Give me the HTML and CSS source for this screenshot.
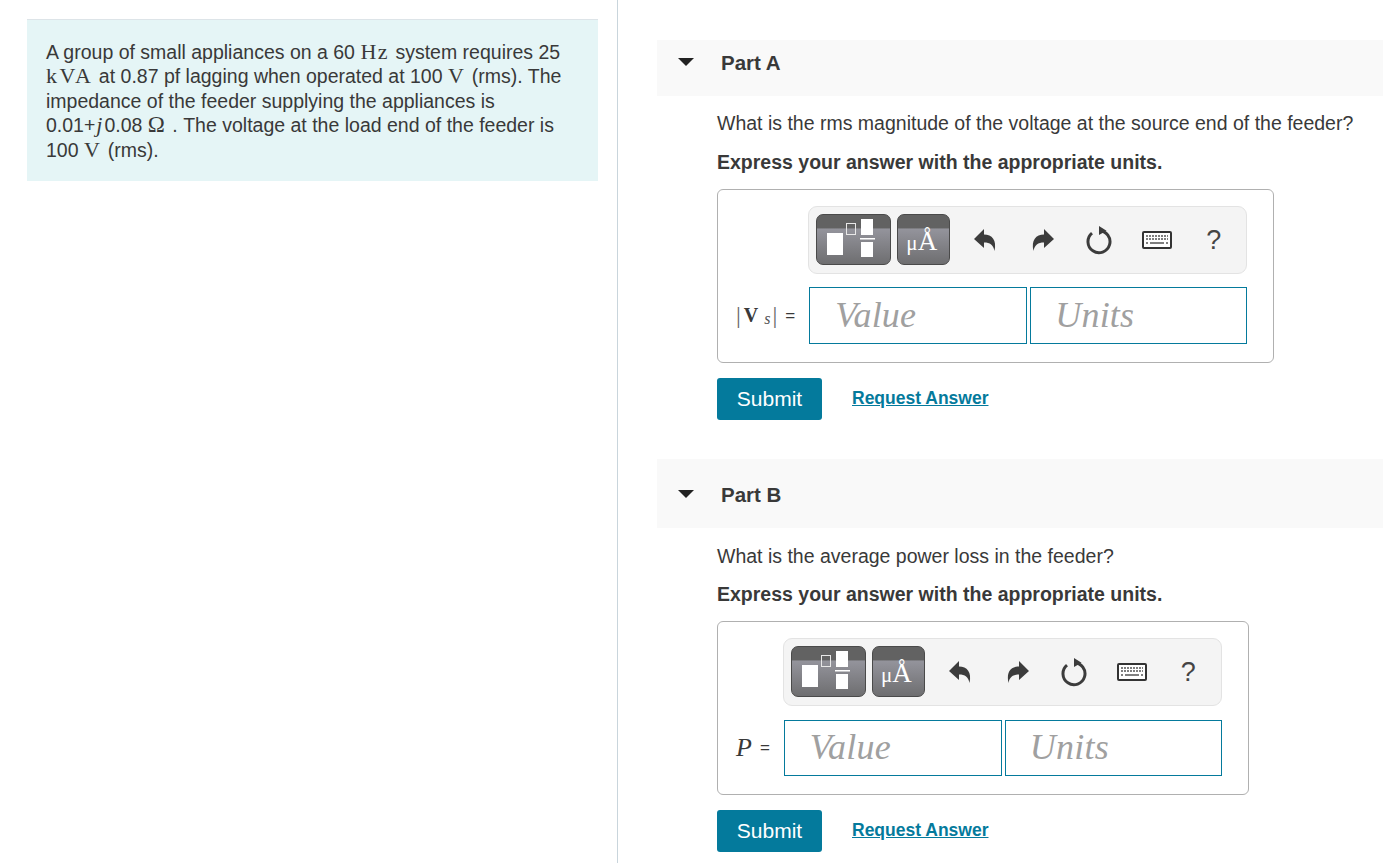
FILE: index.html
```html
<!DOCTYPE html>
<html lang="en">
<head>
  <meta charset="UTF-8">
  <meta name="viewport" content="width=device-width, initial-scale=1.0">
  <title>Feeder Problem</title>
  <link rel="stylesheet" href="styles.css">
</head>
<body>
  <div class="page">
    <div class="left-col">
      <div class="intro">
        A group of small appliances on a 60 <span class="math">Hz</span> system requires 25
        <span class="math math-kva">kVA</span> at 0.87 pf lagging when operated at 100 <span class="math">V</span> (rms). The
        impedance of the feeder supplying the appliances is<br>
        0.01+<span class="math-it">j</span>0.08 <span class="math-ohm">Ω</span> . The voltage at the load end of the feeder is
        100 <span class="math">V</span> (rms).
      </div>
    </div>

    <div class="right-col">
      <!-- Part A -->
      <div class="part-bar part-bar-a">
        <span class="caret"></span>
        <span class="part-title">Part A</span>
      </div>
      <div class="part-body">
        <p class="question">What is the rms magnitude of the voltage at the source end of the feeder?</p>
        <p class="instruction">Express your answer with the appropriate units.</p>
        <div class="answer-box">
          <div class="toolbar">
            <span class="tool-btn tool-template">
              <svg width="73" height="49" viewBox="0 0 73 49">
                <rect x="10" y="18" width="16" height="22" fill="#fff"/>
                <rect x="29.5" y="8.5" width="9" height="11" fill="none" stroke="#e8e8e8" stroke-width="1"/>
                <rect x="44" y="4" width="12" height="16" fill="#fff"/>
                <rect x="43" y="23" width="15" height="1.5" fill="#fff"/>
                <rect x="44" y="27" width="12" height="15" fill="#fff"/>
              </svg>
            </span>
            <span class="tool-btn tool-units"><span class="mu">μ</span><span class="ang">Å</span></span>
            <span class="tool-icon tool-undo">
              <svg width="24" height="24" viewBox="0 0 24 24"><path d="M0 11 L10 1 V6.5 C18 6.5 23 12 20.5 23 C19.5 17 16 14.5 10 14.5 V20 Z" fill="#3c3c3c"/></svg>
            </span>
            <span class="tool-icon tool-redo">
              <svg width="24" height="24" viewBox="0 0 24 24"><path d="M24 11 L14 1 V6.5 C6 6.5 1 12 3.5 23 C4.5 17 8 14.5 14 14.5 V20 Z" fill="#3c3c3c"/></svg>
            </span>
            <span class="tool-icon tool-reset">
              <svg width="28" height="30" viewBox="0 0 28 30"><path d="M14 5.7 A11 11 0 1 1 7 8.2" fill="none" stroke="#3c3c3c" stroke-width="3"/><path d="M14 1 L21.5 5.7 L14 10 Z" fill="#3c3c3c"/></svg>
            </span>
            <span class="tool-icon tool-keys">
              <svg width="30" height="18" viewBox="0 0 30 18">
                <rect x="1" y="1" width="28" height="16" rx="1" fill="#fff" stroke="#333" stroke-width="2"/>
                <path d="M4 5 H26 M4 8 H26" stroke="#555" stroke-width="1.4" stroke-dasharray="2 1"/>
                <path d="M4 12 H6 M8 12 H22 M24 12 H26" stroke="#555" stroke-width="1.6"/>
              </svg>
            </span>
            <span class="tool-help">?</span>
          </div>
          <div class="input-row">
            <span class="var-label"><span class="bar">|</span><b class="bold-v">V</b><i class="sub">s</i><span class="bar">|</span><span class="eq">=</span></span>
            <span class="field">Value</span>
            <span class="field field-units">Units</span>
          </div>
        </div>
        <div class="actions">
          <button class="submit-btn">Submit</button>
          <a class="request-link" href="#">Request Answer</a>
        </div>
      </div>

      <!-- Part B -->
      <div class="part-bar part-bar-b">
        <span class="caret"></span>
        <span class="part-title">Part B</span>
      </div>
      <div class="part-body part-body-b">
        <p class="question">What is the average power loss in the feeder?</p>
        <p class="instruction">Express your answer with the appropriate units.</p>
        <div class="answer-box">
          <div class="toolbar">
            <span class="tool-btn tool-template">
              <svg width="73" height="49" viewBox="0 0 73 49">
                <rect x="10" y="18" width="16" height="22" fill="#fff"/>
                <rect x="29.5" y="8.5" width="9" height="11" fill="none" stroke="#e8e8e8" stroke-width="1"/>
                <rect x="44" y="4" width="12" height="16" fill="#fff"/>
                <rect x="43" y="23" width="15" height="1.5" fill="#fff"/>
                <rect x="44" y="27" width="12" height="15" fill="#fff"/>
              </svg>
            </span>
            <span class="tool-btn tool-units"><span class="mu">μ</span><span class="ang">Å</span></span>
            <span class="tool-icon tool-undo">
              <svg width="24" height="24" viewBox="0 0 24 24"><path d="M0 11 L10 1 V6.5 C18 6.5 23 12 20.5 23 C19.5 17 16 14.5 10 14.5 V20 Z" fill="#3c3c3c"/></svg>
            </span>
            <span class="tool-icon tool-redo">
              <svg width="24" height="24" viewBox="0 0 24 24"><path d="M24 11 L14 1 V6.5 C6 6.5 1 12 3.5 23 C4.5 17 8 14.5 14 14.5 V20 Z" fill="#3c3c3c"/></svg>
            </span>
            <span class="tool-icon tool-reset">
              <svg width="28" height="30" viewBox="0 0 28 30"><path d="M14 5.7 A11 11 0 1 1 7 8.2" fill="none" stroke="#3c3c3c" stroke-width="3"/><path d="M14 1 L21.5 5.7 L14 10 Z" fill="#3c3c3c"/></svg>
            </span>
            <span class="tool-icon tool-keys">
              <svg width="30" height="18" viewBox="0 0 30 18">
                <rect x="1" y="1" width="28" height="16" rx="1" fill="#fff" stroke="#333" stroke-width="2"/>
                <path d="M4 5 H26 M4 8 H26" stroke="#555" stroke-width="1.4" stroke-dasharray="2 1"/>
                <path d="M4 12 H6 M8 12 H22 M24 12 H26" stroke="#555" stroke-width="1.6"/>
              </svg>
            </span>
            <span class="tool-help">?</span>
          </div>
          <div class="input-row">
            <span class="var-label"><i class="var-p">P</i><span class="eq">=</span></span>
            <span class="field">Value</span>
            <span class="field field-units">Units</span>
          </div>
        </div>
        <div class="actions">
          <button class="submit-btn">Submit</button>
          <a class="request-link" href="#">Request Answer</a>
        </div>
      </div>
    </div>
  </div>
</body>
</html>
```

FILE: styles.css
```css
* {
  box-sizing: border-box;
}

html, body {
  height: 100%;
}

body {
  margin: 0;
  background: #ffffff;
  color: #393939;
  font-family: "Liberation Sans", Arial, sans-serif;
  font-size: 19.5px;
  overflow: hidden;
}

.page {
  display: flex;
  height: 863px;
}

.left-col {
  width: 618px;
  padding: 19px 19px 0 27px;
  border-right: 1px solid #c9d5dc;
}

.intro {
  height: 162px;
  padding: 20px 19px;
  background: #e5f5f6;
  border-top: 1px solid #dde4e8;
  line-height: 24.4px;
}

.math,
.math-it,
.math-ohm {
  font-family: "Liberation Serif", serif;
  line-height: 1;
}

.math {
  font-size: 22px;
  letter-spacing: 1.5px;
  margin-right: 1px;
}

.math-kva {
  letter-spacing: 2.5px;
  margin-right: 0;
}

.math-it {
  font-style: italic;
  font-size: 22px;
  margin: 0 2px 0 1px;
}

.math-ohm {
  font-size: 23px;
  margin-right: 2px;
}

.right-col {
  flex: 1;
  padding: 40px 0 0 39px;
}

.part-bar {
  display: flex;
  align-items: flex-start;
  background: #f9f9f9;
}

.part-bar-a {
  height: 56px;
}

.part-bar-b {
  height: 69px;
  margin-top: 39px;
  padding-top: 13px;
}

.caret {
  width: 0;
  height: 0;
  margin: 18px 0 0 21px;
  border-left: 8px solid transparent;
  border-right: 8px solid transparent;
  border-top: 8px solid #222222;
}

.part-title {
  margin: 11px 0 0 27px;
  font-size: 20.5px;
  font-weight: bold;
}

.part-body {
  padding-left: 60px;
}

.question {
  margin: 15px 0 0;
  line-height: 24px;
}

.instruction {
  margin: 15px 0 0;
  line-height: 24px;
  font-weight: bold;
}

.part-body-b .question {
  margin-top: 16px;
}

.part-body-b .instruction {
  margin-top: 14px;
}

.answer-box {
  display: flex;
  flex-direction: column;
  align-items: flex-end;
  width: fit-content;
  height: 174px;
  margin-top: 15px;
  padding: 16px 26px 0 18px;
  border: 1px solid #b0b0b0;
  border-radius: 6px;
}

.toolbar {
  display: flex;
  align-items: center;
  width: 439px;
  height: 68px;
  padding-left: 7px;
  background: #f4f4f4;
  border: 1px solid #e3e3e3;
  border-radius: 9px;
}

.tool-btn {
  display: flex;
  align-items: center;
  justify-content: center;
  height: 51px;
  margin-bottom: 2px;
  border: 1px solid #4a4a4a;
  border-radius: 7px;
  background: linear-gradient(#626262 0, #626262 27%, #94949c 28%, #6e6e70 100%);
  color: #ffffff;
  font-family: "Liberation Serif", serif;
}

.tool-template {
  width: 75px;
}

.tool-units {
  width: 53px;
  margin-left: 6px;
  padding-right: 4px;
}

.mu {
  font-size: 21px;
  margin-top: 8px;
}

.ang {
  font-size: 27px;
  margin-top: 4px;
}

.tool-icon {
  display: flex;
  align-items: center;
  justify-content: center;
}

.tool-undo {
  margin-left: 24px;
}

.tool-redo {
  margin-left: 32px;
}

.tool-reset {
  margin-left: 31px;
}

.tool-keys {
  margin-left: 29px;
}

.tool-help {
  margin-left: 34px;
  font-size: 27px;
  color: #444444;
}

.input-row {
  display: flex;
  align-items: center;
  margin-top: 13px;
}

.part-body-b .input-row {
  margin-top: 14px;
}

.var-label {
  display: flex;
  align-items: center;
  margin-right: 14px;
  font-family: "Liberation Serif", serif;
  font-size: 24px;
}

.bar {
  color: #666666;
  font-weight: 300;
}

.bold-v {
  font-size: 20px;
  margin-left: 3px;
}

.sub {
  font-size: 16px;
  margin: 6px 2px 0 6px;
  color: #555555;
}

.eq {
  font-family: "Liberation Sans", Arial, sans-serif;
  font-size: 17px;
  margin-left: 8px;
}

.var-p {
  font-size: 26px;
}

.field {
  display: flex;
  align-items: center;
  width: 218px;
  height: 57px;
  padding: 0 0 2px 25px;
  border: 1px solid #047a9c;
  font-family: "Liberation Serif", serif;
  font-style: italic;
  font-size: 36px;
  letter-spacing: 0.2px;
  color: #a0a0a0;
}

.part-body-b .field {
  height: 56px;
}

.field-units {
  width: 217px;
  margin-left: 3px;
  padding-left: 24px;
}

.actions {
  display: flex;
  align-items: center;
  margin-top: 15px;
}

.submit-btn {
  width: 105px;
  height: 42px;
  padding: 0;
  background: #047a9c;
  color: #ffffff;
  border: none;
  border-radius: 3px;
  font-family: "Liberation Sans", Arial, sans-serif;
  font-size: 21px;
}

.request-link {
  margin: -1px 0 0 30px;
  color: #047a9c;
  font-size: 17.5px;
  font-weight: bold;
}
```
